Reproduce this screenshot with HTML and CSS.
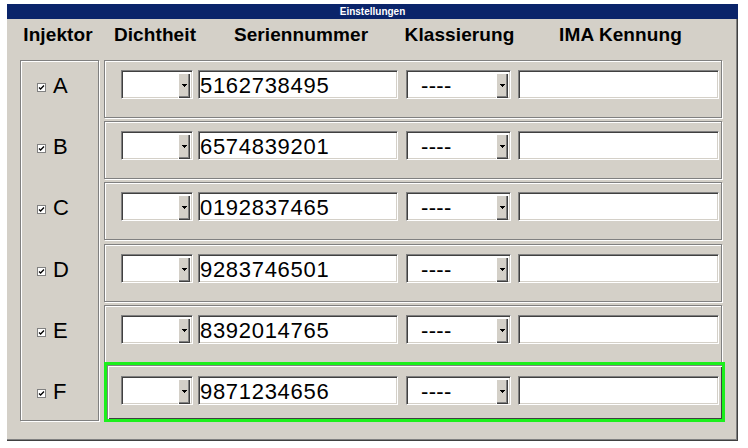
FILE: index.html
```html
<!DOCTYPE html>
<html>
<head>
<meta charset="utf-8">
<link rel="stylesheet" href="styles.css">
</head>
<body>
<div class="window">
  <div class="titlebar">Einstellungen</div>
  <div class="headers">
    <div class="h h-inj"><span>Injektor</span></div>
    <div class="h h-dicht"><span>Dichtheit</span></div>
    <div class="h h-serial"><span>Seriennummer</span></div>
    <div class="h h-klass"><span>Klassierung</span></div>
    <div class="h h-ima"><span>IMA Kennung</span></div>
  </div>
  <div class="content">
    <div class="group-left">
      <div class="lrow"><svg class="cb" width="9" height="9" viewBox="0 0 9 9"><rect x="0.5" y="0.5" width="8" height="8" fill="#fff" stroke="#808080"/><path d="M2 4.5 L3.6 6 L7 2.5" stroke="#000" stroke-width="1.3" fill="none"/></svg><span class="letter">A</span></div>
      <div class="lrow"><svg class="cb" width="9" height="9" viewBox="0 0 9 9"><rect x="0.5" y="0.5" width="8" height="8" fill="#fff" stroke="#808080"/><path d="M2 4.5 L3.6 6 L7 2.5" stroke="#000" stroke-width="1.3" fill="none"/></svg><span class="letter">B</span></div>
      <div class="lrow"><svg class="cb" width="9" height="9" viewBox="0 0 9 9"><rect x="0.5" y="0.5" width="8" height="8" fill="#fff" stroke="#808080"/><path d="M2 4.5 L3.6 6 L7 2.5" stroke="#000" stroke-width="1.3" fill="none"/></svg><span class="letter">C</span></div>
      <div class="lrow"><svg class="cb" width="9" height="9" viewBox="0 0 9 9"><rect x="0.5" y="0.5" width="8" height="8" fill="#fff" stroke="#808080"/><path d="M2 4.5 L3.6 6 L7 2.5" stroke="#000" stroke-width="1.3" fill="none"/></svg><span class="letter">D</span></div>
      <div class="lrow"><svg class="cb" width="9" height="9" viewBox="0 0 9 9"><rect x="0.5" y="0.5" width="8" height="8" fill="#fff" stroke="#808080"/><path d="M2 4.5 L3.6 6 L7 2.5" stroke="#000" stroke-width="1.3" fill="none"/></svg><span class="letter">E</span></div>
      <div class="lrow"><svg class="cb" width="9" height="9" viewBox="0 0 9 9"><rect x="0.5" y="0.5" width="8" height="8" fill="#fff" stroke="#808080"/><path d="M2 4.5 L3.6 6 L7 2.5" stroke="#000" stroke-width="1.3" fill="none"/></svg><span class="letter">F</span></div>
    </div>
    <div class="rows">
      <div class="row">
        <div class="combo dicht"><span class="val"></span><span class="btn"><svg width="5" height="3" viewBox="0 0 5 3"><path d="M0 0h5v1h-5z M1 1h3v1h-3z M2 2h1v1h-1z"/></svg></span></div>
        <div class="field serial">5162738495</div>
        <div class="combo klass"><span class="val">----</span><span class="btn"><svg width="5" height="3" viewBox="0 0 5 3"><path d="M0 0h5v1h-5z M1 1h3v1h-3z M2 2h1v1h-1z"/></svg></span></div>
        <div class="field ima"></div>
      </div>
      <div class="row">
        <div class="combo dicht"><span class="val"></span><span class="btn"><svg width="5" height="3" viewBox="0 0 5 3"><path d="M0 0h5v1h-5z M1 1h3v1h-3z M2 2h1v1h-1z"/></svg></span></div>
        <div class="field serial">6574839201</div>
        <div class="combo klass"><span class="val">----</span><span class="btn"><svg width="5" height="3" viewBox="0 0 5 3"><path d="M0 0h5v1h-5z M1 1h3v1h-3z M2 2h1v1h-1z"/></svg></span></div>
        <div class="field ima"></div>
      </div>
      <div class="row">
        <div class="combo dicht"><span class="val"></span><span class="btn"><svg width="5" height="3" viewBox="0 0 5 3"><path d="M0 0h5v1h-5z M1 1h3v1h-3z M2 2h1v1h-1z"/></svg></span></div>
        <div class="field serial">0192837465</div>
        <div class="combo klass"><span class="val">----</span><span class="btn"><svg width="5" height="3" viewBox="0 0 5 3"><path d="M0 0h5v1h-5z M1 1h3v1h-3z M2 2h1v1h-1z"/></svg></span></div>
        <div class="field ima"></div>
      </div>
      <div class="row">
        <div class="combo dicht"><span class="val"></span><span class="btn"><svg width="5" height="3" viewBox="0 0 5 3"><path d="M0 0h5v1h-5z M1 1h3v1h-3z M2 2h1v1h-1z"/></svg></span></div>
        <div class="field serial">9283746501</div>
        <div class="combo klass"><span class="val">----</span><span class="btn"><svg width="5" height="3" viewBox="0 0 5 3"><path d="M0 0h5v1h-5z M1 1h3v1h-3z M2 2h1v1h-1z"/></svg></span></div>
        <div class="field ima"></div>
      </div>
      <div class="row">
        <div class="combo dicht"><span class="val"></span><span class="btn"><svg width="5" height="3" viewBox="0 0 5 3"><path d="M0 0h5v1h-5z M1 1h3v1h-3z M2 2h1v1h-1z"/></svg></span></div>
        <div class="field serial">8392014765</div>
        <div class="combo klass"><span class="val">----</span><span class="btn"><svg width="5" height="3" viewBox="0 0 5 3"><path d="M0 0h5v1h-5z M1 1h3v1h-3z M2 2h1v1h-1z"/></svg></span></div>
        <div class="field ima"></div>
      </div>
      <div class="row selected">
        <div class="combo dicht"><span class="val"></span><span class="btn"><svg width="5" height="3" viewBox="0 0 5 3"><path d="M0 0h5v1h-5z M1 1h3v1h-3z M2 2h1v1h-1z"/></svg></span></div>
        <div class="field serial">9871234656</div>
        <div class="combo klass"><span class="val">----</span><span class="btn"><svg width="5" height="3" viewBox="0 0 5 3"><path d="M0 0h5v1h-5z M1 1h3v1h-3z M2 2h1v1h-1z"/></svg></span></div>
        <div class="field ima"></div>
      </div>
    </div>
  </div>
</div>
</body>
</html>
```

FILE: styles.css
```css
* { box-sizing: border-box; }
html, body { margin: 0; padding: 0; background: #ffffff; }
body { font-family: "Liberation Sans", Arial, sans-serif; color: #000; }

.window {
  margin: 4px 0 0 7px;
  width: 731px;
  height: 437px;
  background: #d4d0c8;
  box-shadow: inset -1px -1px 0 #404040, inset -2px -2px 0 #808080;
}

.titlebar {
  height: 15px;
  background: #0a246a;
  color: #fff;
  font-size: 10px;
  font-weight: bold;
  line-height: 15px;
  text-align: center;
}

.headers {
  height: 41px;
  padding: 5px 0 0 13px;
  display: flex;
  align-items: flex-start;
}
.h {
  display: flex;
  justify-content: center;
  white-space: nowrap;
  font-size: 19px;
  font-weight: bold;
  line-height: 22px;
  letter-spacing: 0.1px;
}
.h-inj { width: 76px; }
.h-dicht { width: 72px; margin-left: 23px; }
.h-serial { width: 200px; margin-left: 10px; }
.h-klass { width: 105px; margin-left: 6px; }
.h-ima { width: 201px; margin-left: 8px; }

.content {
  display: flex;
  align-items: flex-start;
  gap: 5px;
  padding-left: 13px;
}

.group-left {
  width: 79px;
  height: 361px;
  border: 1px solid #808080;
  box-shadow: inset 1px 1px 0 #fff, 1px 1px 0 #fff;
  display: grid;
  grid-auto-rows: 58px;
  row-gap: 3.2px;
}
.lrow {
  display: flex;
  align-items: flex-start;
  padding: 9px 0 0 16px;
  margin-top: -1px;
}
.cb { margin-top: 14px; display: block; }
.letter {
  margin-left: 7px;
  font-size: 22px;
  line-height: 29px;
  padding-top: 2px;
}

.rows {
  width: 618px;
  display: grid;
  grid-auto-rows: 58px;
  row-gap: 3.2px;
}
.row {
  display: flex;
  align-items: flex-start;
  padding: 9px 0 0 16px;
  border: 1px solid #808080;
  box-shadow: inset 1px 1px 0 #fff, 1px 1px 0 #fff;
}
.row.selected {
  margin-top: -4px;
  height: 60px;
  margin-right: -3px;
  border: 3px solid #1cef1c;
  padding: 11px 0 0 14px;
  box-shadow: inset 1px 1px 0 #808080, inset 2px 2px 0 #fff, inset -1px -1px 0 #404040;
}

.field, .combo {
  height: 29px;
  background: #fff;
  border: 1px solid;
  border-color: #808080 #fff #fff #808080;
  box-shadow: inset 1px 1px 0 #404040, inset -1px -1px 0 #d4d0c8;
  font-size: 22px;
  line-height: 27px;
  white-space: nowrap;
}
.field { padding-left: 1px; padding-top: 1px; letter-spacing: 0.7px; }
.combo { display: flex; padding: 2px; }
.combo .val { flex: 1; padding-left: 12px; line-height: 29px; margin-top: -2px; letter-spacing: 0.3px; }
.combo .btn {
  width: 12px;
  height: 25px;
  background: #d4d0c8;
  box-shadow: inset 1px 1px 0 #fff, inset -1px -1px 0 #404040, inset -2px -2px 0 #808080;
  display: flex;
  align-items: center;
  justify-content: center;
}
.combo .btn svg { display: block; fill: #000; }

.dicht { width: 72px; }
.serial { width: 200px; margin-left: 5px; }
.klass { width: 105px; margin-left: 8px; }
.ima { width: 201px; margin-left: 7px; }
```
